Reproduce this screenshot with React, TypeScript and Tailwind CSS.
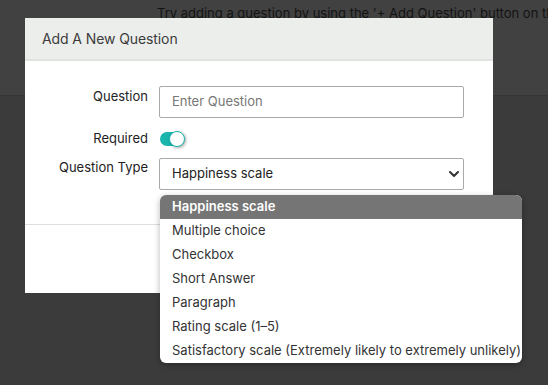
import React from 'react';
import { ChevronDown } from 'lucide-react';

const options = [
    'Happiness scale',
    'Multiple choice',
    'Checkbox',
    'Short Answer',
    'Paragraph',
    'Rating scale (1–5)',
    'Satisfactory scale (Extremely likely to extremely unlikely)',
];

export default function App() {
    return (
        <div className="relative w-[548px] h-[385px] overflow-hidden bg-[#3b3b3b] text-[#222]" style={{ fontFamily: 'Inter, "Noto Sans", sans-serif' }}>
            {/* page behind the backdrop */}
            <div className="h-[96px] bg-[#414141] border-b border-[#353535] pl-[157px] pt-[5px]">
                <p className="text-[13px] leading-[16px] whitespace-nowrap text-black opacity-70">
                    Try adding a question by using the '+ Add Question' button on the top
                </p>
            </div>

            {/* modal */}
            <div className="absolute left-[25px] top-[18px] w-[468px] h-[275px] bg-white flex flex-col">
                <div className="h-[43px] bg-[#eceeec] border-b-[2px] border-[#e1e3e1] flex items-center px-[17px]">
                    <span className="text-[14px] text-[#3c3c3c] tracking-[-0.1px]">Add A New Question</span>
                </div>
                <div className="flex flex-col pt-[25px] h-[164px] border-b border-[#dedede]">
                    <div className="flex items-start">
                        <div className="w-[123px] text-right text-[13px] pt-[1px]">Question</div>
                        <div className="ml-[11px] w-[305px] h-[32px] border border-[#a9a9a9] rounded-[2px] flex items-center px-[12px] text-[13px] text-[#777]">
                            Enter Question
                        </div>
                    </div>
                    <div className="flex items-center mt-[11px]">
                        <div className="w-[123px] text-right text-[13px]">Required</div>
                        <div className="ml-[12px] relative w-[24px] h-[14px] rounded-full bg-[#1ab5ad]">
                            <div className="absolute right-[-1px] top-[-1px] w-[16px] h-[16px] rounded-full bg-white border border-[#1ab5ad] shadow-[1px_1px_3px_rgba(0,0,0,0.35)]" />
                        </div>
                    </div>
                    <div className="flex items-start mt-[9px]">
                        <div className="w-[123px] text-right text-[13px]">Question Type</div>
                        <div className="ml-[11px] w-[305px] h-[32px] border border-[#a9a9a9] rounded-[2px] flex items-center justify-between pl-[12px] pr-[1px] text-[13px]">
                            <span>Happiness scale</span>
                            <ChevronDown size={16} strokeWidth={3} className="text-[#333]" />
                        </div>
                    </div>
                </div>
            </div>

            {/* open select menu */}
            <div className="absolute left-[160px] top-[195px] w-[362px] bg-white rounded-[6px] overflow-hidden shadow-[0_2px_6px_rgba(0,0,0,0.3)] text-[13px]">
                {options.map((o, i) => (
                    <div
                        key={o}
                        className={`h-[24px] flex items-center px-[12px] whitespace-nowrap ${i === 0 ? 'bg-[#757575] text-white font-semibold' : 'text-[#333]'}`}
                    >
                        {o}
                    </div>
                ))}
            </div>
        </div>
    );
}
